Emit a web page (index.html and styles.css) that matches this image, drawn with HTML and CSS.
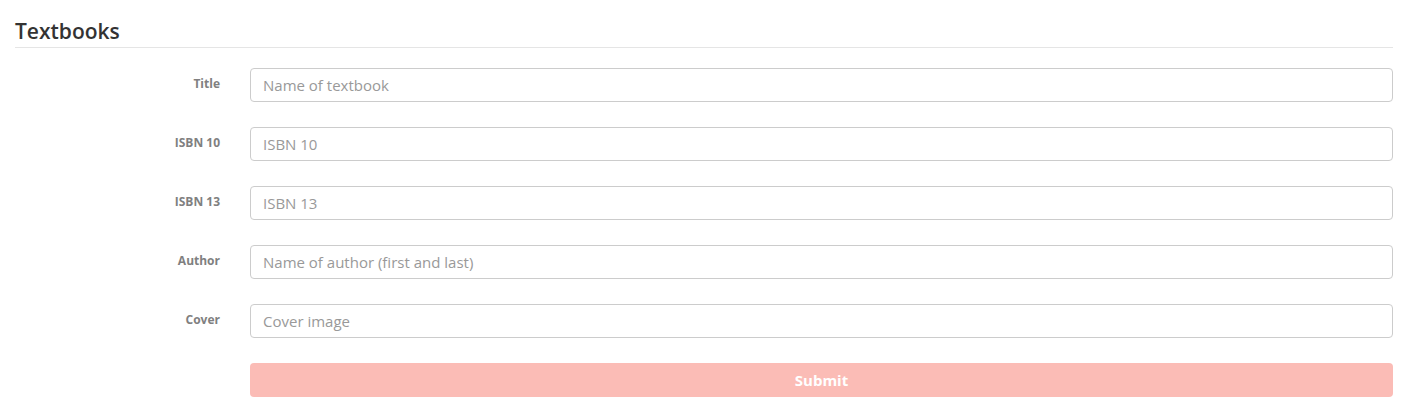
FILE: index.html
```html
<!DOCTYPE html>
<html lang="en">
<head>
<meta charset="utf-8">
<title>Textbooks</title>
<link rel="stylesheet" href="styles.css">
</head>
<body>
<section class="panel">
  <h2 class="panel-title">Textbooks</h2>
  <form class="form">
    <div class="row">
      <label class="label" for="title">Title</label>
      <input class="input" id="title" type="text" placeholder="Name of textbook">
    </div>
    <div class="row">
      <label class="label" for="isbn10">ISBN 10</label>
      <input class="input" id="isbn10" type="text" placeholder="ISBN 10">
    </div>
    <div class="row">
      <label class="label" for="isbn13">ISBN 13</label>
      <input class="input" id="isbn13" type="text" placeholder="ISBN 13">
    </div>
    <div class="row">
      <label class="label" for="author">Author</label>
      <input class="input" id="author" type="text" placeholder="Name of author (first and last)">
    </div>
    <div class="row">
      <label class="label" for="cover">Cover</label>
      <input class="input" id="cover" type="text" placeholder="Cover image">
    </div>
    <div class="row">
      <span class="label"></span>
      <button class="submit" type="button">Submit</button>
    </div>
  </form>
</section>
</body>
</html>
```

FILE: styles.css
```css
* { box-sizing: border-box; }
html, body { margin: 0; background: #fff; }
body {
  font-family: "Open Sans", "Noto Sans", sans-serif;
  color: #333;
}
.panel {
  padding: 16px 21px 0 15px;
}
.panel-title {
  margin: 0;
  font-size: 21px;
  font-weight: 600;
  line-height: 31px;
  color: #333;
  border-bottom: 1px solid #e5e5e5;
}
.form {
  display: flex;
  flex-direction: column;
  gap: 25px;
  padding-top: 20px;
}
.row {
  display: grid;
  grid-template-columns: 235px 1fr;
  align-items: center;
}
.label {
  text-align: right;
  padding-right: 30px;
  font-size: 12px;
  font-weight: 700;
  color: #808080;
  margin-top: -3px;
}
.input {
  height: 34px;
  width: 100%;
  border: 1px solid #ccc;
  border-radius: 4px;
  padding: 0 12px;
  font-family: inherit;
  font-size: 15px;
  font-weight: 500;
  color: #555;
  outline: none;
}
.input::placeholder { color: #999; opacity: 1; }
.submit {
  height: 34px;
  width: 100%;
  border: 0;
  border-radius: 4px;
  background: #fbbcb6;
  color: #fff;
  font-family: inherit;
  font-size: 15px;
  font-weight: 700;
}
```
